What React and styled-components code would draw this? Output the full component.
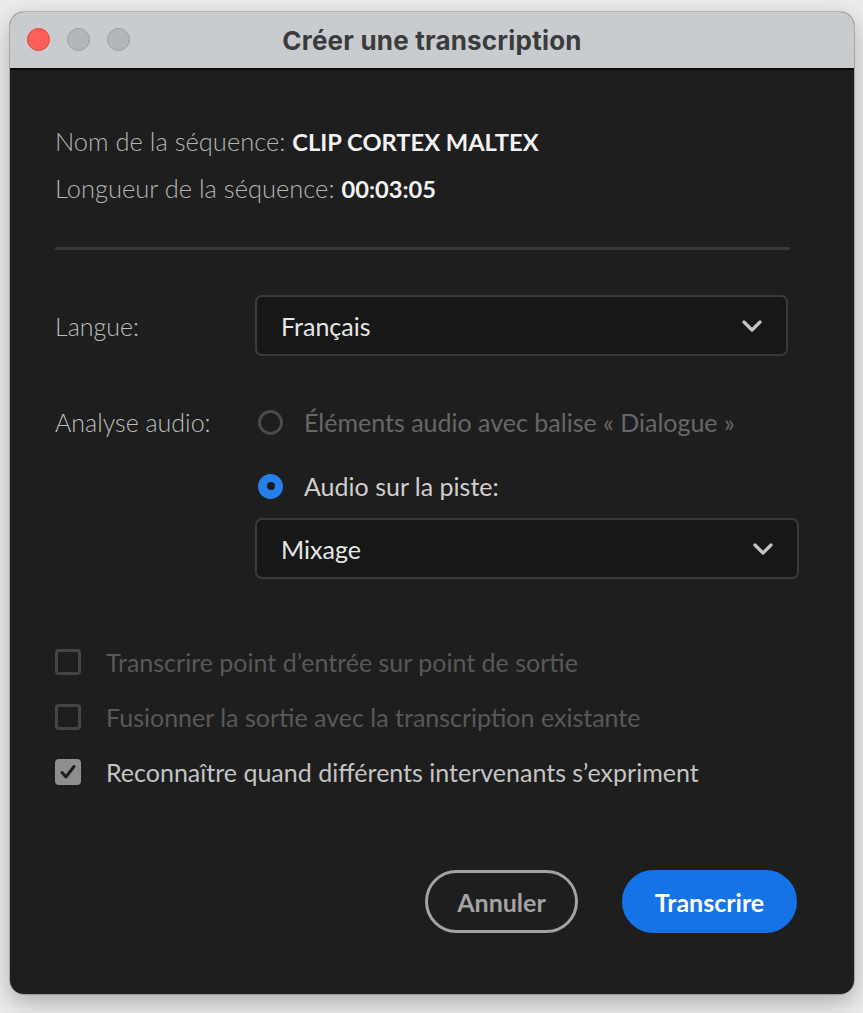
import React from "react";
import styled, { createGlobalStyle } from "styled-components";

const GlobalStyle = createGlobalStyle`
  html, body {
    margin: 0;
    padding: 0;
    background: #ececec;
  }
  body {
    font-family: "Lato", "Open Sans", sans-serif;
  }
`;

const Page = styled.div`
  padding: 12px 9px 18px 10px;
  min-height: 1013px;
  box-sizing: border-box;
`;

const Window = styled.div`
  width: 844px;
  border-radius: 14px;
  overflow: hidden;
  background: #1e1e1e;
  box-shadow: 0 8px 24px rgba(0, 0, 0, 0.28), 0 0 0 1px rgba(0, 0, 0, 0.18);
  display: flex;
  flex-direction: column;
`;

const TitleBar = styled.div`
  position: relative;
  height: 56px;
  background: #c9cccf;
  border-bottom: 2px solid #0b0b0b;
  display: flex;
  align-items: center;
  justify-content: center;
`;

const Lights = styled.div`
  position: absolute;
  left: 17px;
  top: 16px;
  display: flex;
  gap: 17px;
`;

const Light = styled.span`
  width: 23px;
  height: 23px;
  border-radius: 50%;
  box-sizing: border-box;
  background: ${(p) => (p.red ? "#fe5f57" : "#b4b7ba")};
  border: 1px solid ${(p) => (p.red ? "#e0443e" : "#9fa2a5")};
`;

const Title = styled.div`
  font-family: "Inter", "Liberation Sans", sans-serif;
  font-weight: 700;
  font-size: 26px;
  color: #3b3b3b;
  letter-spacing: 0.2px;
`;

const Body = styled.div`
  padding: 48px 57px 61px 45px;
  display: flex;
  flex-direction: column;
`;

const InfoLine = styled.div`
  font-size: 25.5px;
  line-height: 46px;
  font-weight: 300;
  color: #b4b4b4;
  b {
    font-size: 23.7px;
    font-weight: 700;
    color: #f2f2f2;
  }
`;

const Divider = styled.div`
  margin-top: 35px;
  width: 735px;
  height: 3px;
  border-radius: 2px;
  background: #3a3a3a;
`;

const FormRow = styled.div`
  display: grid;
  grid-template-columns: 200px 1fr;
  align-items: ${(p) => p.align || "center"};
  margin-top: ${(p) => p.mt}px;
`;

const Label = styled.div`
  font-size: 25px;
  font-weight: 300;
  color: #bdbdbd;
  line-height: 50px;
`;

const Select = styled.div`
  width: ${(p) => p.w}px;
  height: 61px;
  box-sizing: border-box;
  border: 2px solid #3a3a3a;
  border-radius: 7px;
  background: #171717;
  display: flex;
  align-items: center;
  justify-content: space-between;
  padding: 0 24px 0 24px;
  font-size: 25px;
  color: #e6e6e6;
  margin-top: ${(p) => p.mt || 0}px;
`;

const Options = styled.div`
  display: flex;
  flex-direction: column;
`;

const RadioRow = styled.div`
  height: 50px;
  display: flex;
  align-items: center;
  gap: 21px;
  padding-left: 3px;
  margin-top: ${(p) => p.mt || 0}px;
  font-size: 25px;
  color: ${(p) => (p.disabled ? "#676767" : "#cfcfcf")};
`;

const Radio = styled.span`
  width: 25px;
  height: 25px;
  border-radius: 50%;
  box-sizing: border-box;
  flex: none;
  display: flex;
  align-items: center;
  justify-content: center;
  border: ${(p) => (p.on ? "none" : "3.5px solid #4a4a4a")};
  background: ${(p) => (p.on ? "#2680eb" : "transparent")};
  &::after {
    content: "";
    display: ${(p) => (p.on ? "block" : "none")};
    width: 8px;
    height: 8px;
    border-radius: 50%;
    background: #1b1b1b;
  }
`;

const Checks = styled.div`
  margin-top: 55px;
  display: flex;
  flex-direction: column;
`;

const CheckRow = styled.div`
  height: 55px;
  display: flex;
  align-items: center;
  gap: 25px;
  font-size: 25px;
  color: ${(p) => (p.disabled ? "#585858" : "#c4c4c4")};
`;

const Box = styled.span`
  width: 26px;
  height: 26px;
  flex: none;
  box-sizing: border-box;
  border-radius: 4px;
  border: ${(p) => (p.checked ? "none" : "3px solid #444444")};
  background: ${(p) => (p.checked ? "#8e8e8e" : "transparent")};
  display: flex;
  align-items: center;
  justify-content: center;
`;

const Actions = styled.div`
  margin-top: 71px;
  display: flex;
  justify-content: flex-end;
  gap: 44px;
`;

const Button = styled.button`
  height: 63px;
  width: ${(p) => (p.primary ? 175 : 153)}px;
  padding: 0;
  border-radius: 32px;
  box-sizing: border-box;
  font-family: "Lato", "Open Sans", sans-serif;
  font-weight: 700;
  font-size: 25px;
  cursor: pointer;
  border: 3px solid ${(p) => (p.primary ? "#1473e6" : "#a3a3a3")};
  background: ${(p) => (p.primary ? "#1473e6" : "transparent")};
  color: ${(p) => (p.primary ? "#ffffff" : "#a3a3a3")};
`;

const Chevron = () => (
  <svg width="20" height="12" viewBox="0 0 20 12">
    <path
      d="M2 2 L10 10 L18 2"
      fill="none"
      stroke="#c4c4c4"
      strokeWidth="3.2"
      strokeLinecap="round"
      strokeLinejoin="round"
    />
  </svg>
);

const Tick = () => (
  <svg width="18" height="16" viewBox="0 0 18 16">
    <path
      d="M3 8.5 L7 13 L15 2.5"
      fill="none"
      stroke="#1e1e1e"
      strokeWidth="3"
      strokeLinecap="round"
      strokeLinejoin="round"
    />
  </svg>
);

export default function App() {
  return (
    <Page>
      <GlobalStyle />
      <Window>
        <TitleBar>
          <Lights>
            <Light red />
            <Light />
            <Light />
          </Lights>
          <Title>Créer une transcription</Title>
        </TitleBar>
        <Body>
          <InfoLine>
            Nom de la séquence: <b>CLIP CORTEX MALTEX</b>
          </InfoLine>
          <InfoLine>
            Longueur de la séquence: <b>00:03:05</b>
          </InfoLine>
          <Divider />

          <FormRow mt={45}>
            <Label>Langue:</Label>
            <Select w={533}>
              Français
              <Chevron />
            </Select>
          </FormRow>

          <FormRow mt={41} align="start">
            <Label>Analyse audio:</Label>
            <Options>
              <RadioRow disabled>
                <Radio />
                Éléments audio avec balise « Dialogue »
              </RadioRow>
              <RadioRow mt={14}>
                <Radio on />
                Audio sur la piste:
              </RadioRow>
              <Select w={544} mt={7}>
                Mixage
                <Chevron />
              </Select>
            </Options>
          </FormRow>

          <Checks>
            <CheckRow disabled>
              <Box />
              Transcrire point d’entrée sur point de sortie
            </CheckRow>
            <CheckRow disabled>
              <Box />
              Fusionner la sortie avec la transcription existante
            </CheckRow>
            <CheckRow>
              <Box checked>
                <Tick />
              </Box>
              Reconnaître quand différents intervenants s’expriment
            </CheckRow>
          </Checks>

          <Actions>
            <Button>Annuler</Button>
            <Button primary>Transcrire</Button>
          </Actions>
        </Body>
      </Window>
    </Page>
  );
}
